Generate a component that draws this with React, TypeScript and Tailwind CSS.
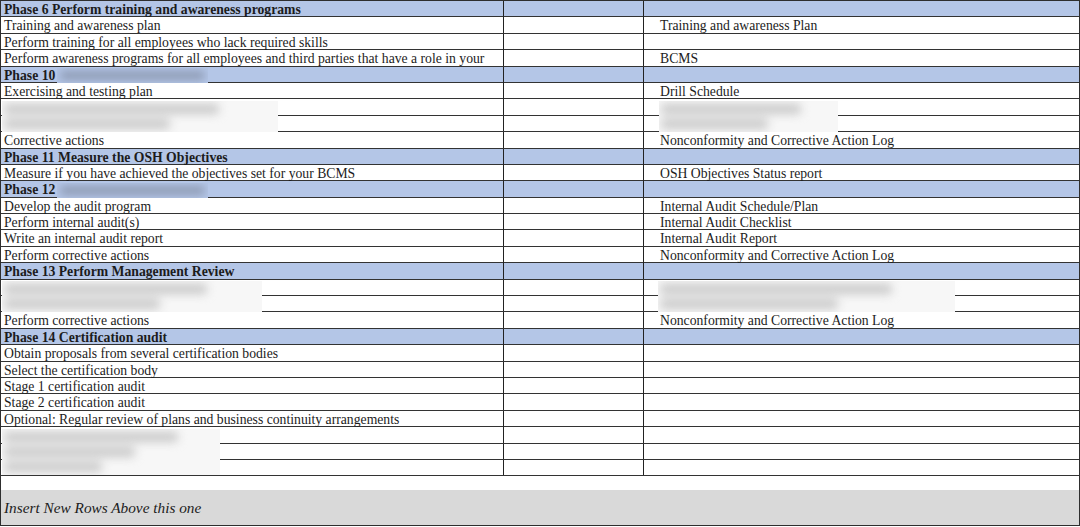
import React from "react";

type Row = { a?: string; c?: string; h?: boolean };

const rows: Row[] = [
  { a: "Phase 6 Perform training and awareness programs", h: true },
  { a: "Training and awareness plan", c: "Training and awareness Plan" },
  { a: "Perform training for all employees who lack required skills" },
  { a: "Perform awareness programs for all employees and third parties that have a role in your", c: "BCMS" },
  { a: "Phase 10 ", h: true },
  { a: "Exercising and testing plan", c: "Drill Schedule" },
  {},
  {},
  { a: "Corrective actions", c: "Nonconformity and Corrective Action Log" },
  { a: "Phase 11 Measure the OSH Objectives", h: true },
  { a: "Measure if you have achieved the objectives set for your BCMS", c: "OSH Objectives Status report" },
  { a: "Phase 12 ", h: true },
  { a: "Develop the audit program", c: "Internal Audit Schedule/Plan" },
  { a: "Perform internal audit(s)", c: "Internal Audit Checklist" },
  { a: "Write an internal audit report", c: "Internal Audit Report" },
  { a: "Perform corrective actions", c: "Nonconformity and Corrective Action Log" },
  { a: "Phase 13 Perform Management Review", h: true },
  {},
  {},
  { a: "Perform corrective actions", c: "Nonconformity and Corrective Action Log" },
  { a: "Phase 14 Certification audit", h: true },
  { a: "Obtain proposals from several certification bodies" },
  { a: "Select the certification body" },
  { a: "Stage 1 certification audit" },
  { a: "Stage 2 certification audit" },
  { a: "Optional: Regular review of plans and business continuity arrangements" },
  {},
  {},
  {},
];

function Blur({ x, y, w, h, tint }: { x: number; y: number; w: number; h: number; tint?: boolean }) {
  const lines = h > 40 ? [0.8, 0.6, 0.45] : [0.78, 0.6];
  return (
    <div
      className={`absolute overflow-hidden ${tint ? "bg-[#b4c6e7]" : "bg-[#f7f7f7]"}`}
      style={{ left: x, top: y, width: w, height: h }}
    >
      {tint ? (
        <div className="h-full px-[3px] py-[3px] blur-[4px]">
          <div className="h-full rounded bg-[#8e9bb4]" />
        </div>
      ) : (
        <div className="flex flex-col gap-[5px] pt-[3px] pl-[2px] blur-[5px]">
          {lines.map((f, i) => (
            <div key={i} className="h-[10px] rounded bg-[#c9c9c9]" style={{ width: w * f }} />
          ))}
        </div>
      )}
    </div>
  );
}

export default function App() {
  return (
    <div
      className="w-[1080px] h-[527px] bg-white text-[#1c1c1c] overflow-hidden"
      style={{ fontFamily: '"Liberation Serif", serif' }}
    >
      <div className="relative">
        <div className="border-t border-l border-r border-[#2e2e2e]">
          {rows.map((r, i) => (
            <div
              key={i}
              className={`grid grid-cols-[503px_140px_1fr] h-[16.4px] border-b border-[#333] ${r.h ? "bg-[#b4c6e7] font-bold" : ""}`}
            >
              <div className="border-r border-[#222] pl-[3px] pt-[1px] text-[13.7px] leading-[15px] whitespace-nowrap">
                {r.a}
              </div>
              <div className="border-r border-[#222]" />
              <div className="pl-[16px] pt-[1px] text-[13.7px] leading-[15px] whitespace-nowrap">{r.c}</div>
            </div>
          ))}
          <div className="h-[14px]" />
          <div className="h-[36px] bg-[#d9d9d9] border-b border-[#2e2e2e] flex items-center pl-[3px] pt-[1px]">
            <span className="italic text-[15.3px]">Insert New Rows Above this one</span>
          </div>
        </div>
        <Blur x={57} y={68} w={151} h={15} tint />
        <Blur x={57} y={183} w={151} h={15} tint />
        <Blur x={2} y={101} w={276} h={31} />
        <Blur x={659} y={101} w={179} h={31} />
        <Blur x={2} y={281} w={260} h={31} />
        <Blur x={658} y={281} w={297} h={31} />
        <Blur x={2} y={429} w={218} h={46} />
      </div>
    </div>
  );
}
